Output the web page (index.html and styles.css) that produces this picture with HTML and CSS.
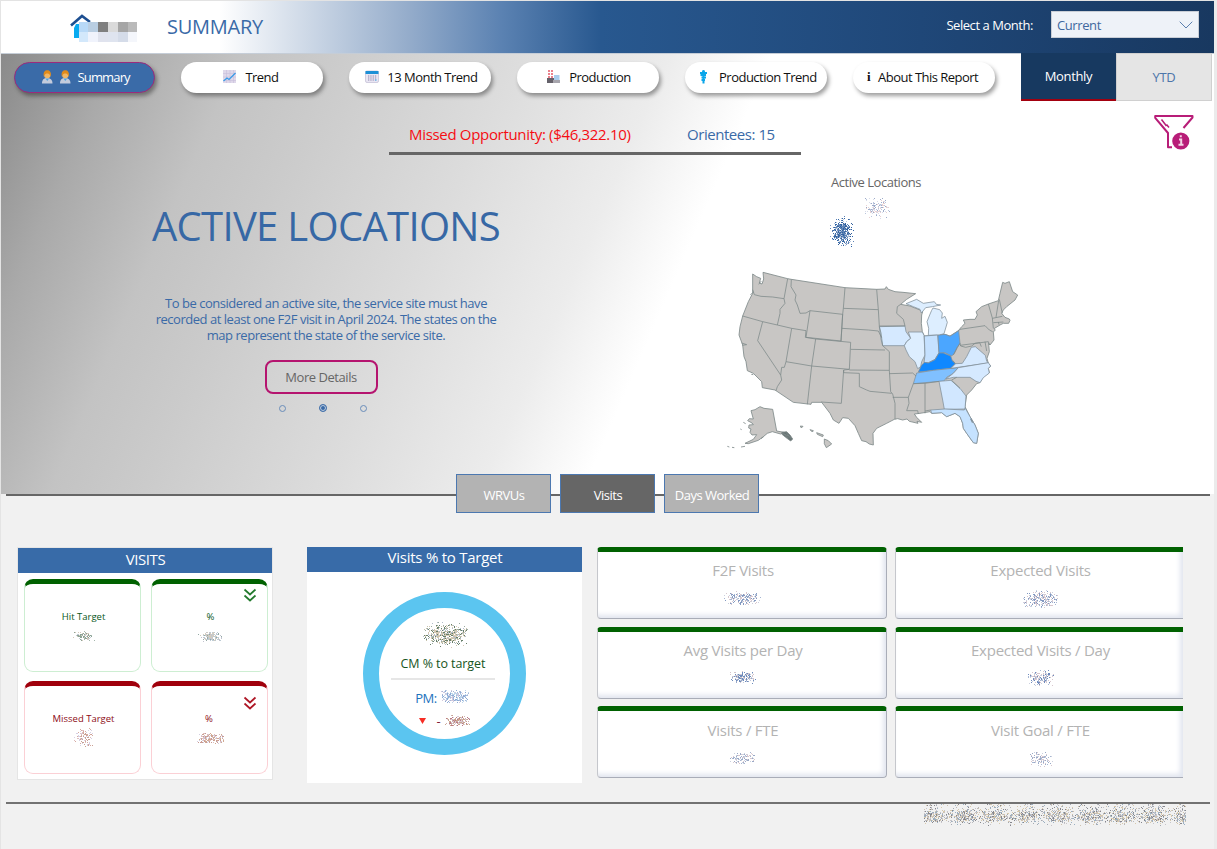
FILE: index.html
```html
<!DOCTYPE html>
<html lang="en">
<head>
<meta charset="utf-8">
<title>Summary</title>
<link rel="stylesheet" href="styles.css">
</head>
<body>
<div class="app">
  <header class="topbar">
    <svg class="logo" width="68" height="30" viewBox="0 0 68 30">
      <path d="M6 10h12v14H4V14z" fill="#08aaf0"/>
      <path d="M1 11.500 12 2l8 6" fill="none" stroke="#1d4f91" stroke-width="2.600"/>
      <g shape-rendering="crispEdges">
        <path d="M9 8h9v10H9z" fill="#b8d9f7"/><path d="M18 8h10v10H18z" fill="#b9cee2"/><path d="M28 8h10v10H28z" fill="#7f7f7f"/><path d="M38 8h10v10H38z" fill="#dadada"/><path d="M48 8h10v10H48z" fill="#a6a6a6"/><path d="M58 8h9v10h-9z" fill="#bababa"/>
        <path d="M9 18h9v10H9z" fill="#d3e8fb"/><path d="M18 18h10v10H18z" fill="#f0f3fc"/><path d="M28 18h10v10H28z" fill="#e0e3ee"/><path d="M38 18h10v10H38z" fill="#dfe4ef"/><path d="M48 18h10v10H48z" fill="#d5dce9"/><path d="M58 18h9v10h-9z" fill="#f4f6fb"/>
      </g>
    </svg>
    <h1 class="page-title">SUMMARY</h1>
    <label class="month-label">Select a Month:</label>
    <div class="month-select"><span>Current</span>
      <svg width="14" height="8" viewBox="0 0 14 8"><path d="M.7.7 7 7 13.300.7" fill="none" stroke="#5b7fae"/></svg>
    </div>
  </header>

  <section class="hero">
    <div class="nav-row">
      <nav class="pills">
        <a class="pill active">
          <svg width="31" height="14" viewBox="0 0 31 14">
            <g id="medic"><path d="M0 13.500c0-4 2-5.500 5-5.500s5.500 1.500 5.500 5.500z" fill="#c3cbdc"/><path d="M3.500 8.500 5.300 11l1.800-2.500z" fill="#4aa3df"/><circle cx="5.300" cy="5" r="3.200" fill="#f0b765"/><path d="M1.800 6.500C1 2 3 .3 5.300.3S9.500 2 8.800 6.500C8 4 6 3.500 5.300 3.500S2.500 4 1.800 6.500z" fill="#e08b1b"/></g>
            <use href="#medic" x="18"/>
          </svg>
          <span>Summary</span></a>
        <a class="pill trend">
          <svg width="13" height="13" viewBox="0 0 13 13"><path d="M0 0h13v13H0z" fill="#dfd8ea"/><path d="M3.500 0v13M7 0v13M10.500 0v13M0 3.500h13M0 7h13M0 10.500h13" stroke="#c8bfda" stroke-width=".6"/><path d="M.5 11 4 8l2 1.500L12.500 3" fill="none" stroke="#3a9be8" stroke-width="1.300"/></svg>
          <span>Trend</span></a>
        <a class="pill month">
          <svg width="14" height="13" viewBox="0 0 14 13"><rect x=".5" y="1" width="13" height="11.500" rx="1.500" fill="#e9e6f3" stroke="#b8b3cc" stroke-width=".6"/><path d="M.5 1h13v3H.5z" fill="#1c8fd6"/><path d="M3 6h9M3 8h9M3 10h7" stroke="#8e86ad" stroke-width="1.200" stroke-dasharray="1.300 1"/><path d="M10 10h1.500" stroke="#1c8fd6"/></svg>
          <span>13 Month Trend</span></a>
        <a class="pill prod">
          <svg width="13" height="13" viewBox="0 0 13 13"><path d="M2 0v8M5 0v8" stroke="#e04050" stroke-width="1.300" stroke-dasharray="2 1"/><path d="M0 8h7v5H0z" fill="#65616a"/><path d="M7 5h5.500v5H7z" fill="#a9cdec"/><path d="M6 10h7v3H6z" fill="#a7a5ad"/></svg>
          <span>Production</span></a>
        <a class="pill ptrend">
          <svg width="9" height="14" viewBox="0 0 9 14"><path d="M4.500 1v12.500M1 3h7M1.500 5h5.500M2.500 7.500h4.500M2.500 10h3.500" fill="none" stroke="#0ba6ea" stroke-width="2"/><circle cx="4.500" cy="1.500" r="1.400" fill="#0ba6ea"/></svg>
          <span>Production Trend</span></a>
        <a class="pill about"><b>i</b><span>About This Report</span></a>
      </nav>
      <div class="period"><a class="on">Monthly</a><a>YTD</a></div>
    </div>

    <div class="kpi-line"><span class="missed">Missed Opportunity: ($46,322.10)</span><span class="orientees">Orientees: 15</span></div>
    <svg class="filter-info" width="42" height="38" viewBox="0 0 42 38" fill="none" stroke="#b81d78" stroke-width="2">
      <path d="M30.500 14 39.500 3.500V2H2.200v1.800L15 19v14.300h4" stroke-linejoin="round"/>
      <path d="m8.500 5.500 5 6.500M13.500 10.500l2.500 3" stroke-width="1.500"/>
      <circle cx="27.800" cy="27" r="8.600" fill="#b81d78" stroke="none"/>
      <path d="M26 25.500h2.200v5M25.500 30.700h5M26.800 22.300h2" stroke="#f2d5e5" stroke-width="2"/>
    </svg>

    <div class="hero-body">
      <div class="intro">
        <h2>ACTIVE LOCATIONS</h2>
        <p><span>To be considered an active site, the service site must have</span><br><span>recorded at least one F2F visit in April 2024. The states on the</span><br><span>map represent the state of the service site.</span></p>
        <a class="more">More Details</a>
        <div class="dots"><i></i><i class="sel"></i><i></i></div>
      </div>
      <div class="locations">
        <div class="map-title">Active Locations</div>
        <svg class="speckle sp-a" width="38" height="24" data-n="150" data-tones="#d8dce9,#b9c5dd,#e9d0d0,#9dabc9"></svg>
        <svg class="speckle sp-b" width="26" height="34" data-n="560" data-tones="#2e63a4,#7d9ac4,#b8c7de,#35629e,#5c82b5"></svg>
        <svg class="map" width="310" height="196" viewBox="0 0 930 588">
          <g fill="#c8c6c4" stroke="#7e8989" stroke-width="2.500" stroke-linejoin="round">
            <path d="M98 42l12 8 12 5-4 14 8 3 5-15-2-20 74 19 11 2 161 25 95 5 25-1 4-7 6 8 20 7 24 2L587 101 560 118 542 133 570 138 600 150 608 155 605 165 604 190 607 215 613 228 653 225 675 223 690 228 715 212 725 200 735 190 730 180 750 178 765 178 772 165 768 155 785 140 805 132 835 122 840 100 848 67 855 70 868 65 878 95 893 105 885 120 860 140 850 150 845 160 855 172 868 177 870 181 866 190 850 190 840 195 822 206 826 210 820 216 822 240 810 255 806 250 808 275 801 295 805 310 812 318 805 325 808 338 790 350 780 368 770 371 755 390 740 405 735 440 750 470 765 495 775 520 770 550 760 548 740 520 730 505 728 490 720 470 705 460 680 470 665 458 635 460 630 455 600 460 583 462 590 472 605 487 591 484 594 490 568 484 561 477 548 480 533 476 523 478 500 490 470 505 459 520 460 555 448 552 438 545 425 542 415 520 405 497 385 475 368 473 357 490 340 480 330 460 305 427 275 427 273 433 220 427 165 390 127 383 125 365 100 340 82 332 78 305 72 290 68 255 57 225 60 200 68 168 85 125 98 100z"/>
            <path d="M93 452l12-3 15-9 12 5 26 3 12 65 22 4-10 5-25-7-15 5-12 10-15 11-30 10-10-1 25-12 10-14-14 1-6-8 3-10-7-3 1-9 13-1-4-5-13-7 5-6 12 1z"/>
            <path d="M185 517l15-2 10 10 8 12-6 6-15-11-12-10" fill="#667373"/><path d="M191 520l15 15m-8-18 15 19m-27-16 20 8m-83 8 8-6"/>
            <path d="M313 537l12 5 10 10-16 11-6-12zM290 518l20 7-2 5-16-7zM241 498l8 1-5 5zM270 509l10 3-3 4zM22 559l6 2m8 1 7 1m20-2 12-2m-5-72 7 4m-16 16 4 2m29-166 6 1"/>
          </g>
          <g transform="translate(450 0)" stroke="#81909a" stroke-width="2.300" stroke-linejoin="round">
            <path d="M108 131l32-13 20 12 33-5 6 8 13 2-25 5-20 3-13 16-4-11-20-8z" fill="#ddeeff"/>
            <path d="M175 226l1-21-5-20 8-20 6-14 4-7 20 5 8 10-2 16 10-6 7 18-4 14-6 20-14 4z" fill="#ddeeff"/>
            <path d="M28 200l77-2 3 17 14 20-12 10-7 12H38l-5-20z" fill="#d5e9ff"/>
            <path d="M115 216h42l5 10 3 59-10 20-3 15-9 6-8-21-17-15-10-20-5-13 7-12 12-10z" fill="#ddeeff"/>
            <path d="M163 228l40-3 4 53-12 20-20 10h-13l3-23z" fill="#c5e1ff"/>
            <path d="M204 226l21-3 15 6 26-17 4 38-8 12-9 18-8 8-20-10-18 2z" fill="#4ba6ff"/>
            <path d="M145 336l10-21 9-8 11 2 20-10 12-20 13 0 22 9 5 14 9 9-15 14-51 6z" fill="#1088ff"/>
            <path d="M130 371l10-32 50-8 75-8-15 17-20 12-8 11z" fill="#80c0ff"/>
            <path d="M243 325l14-14 20-1 13-20 14-28 12-2 14 12 16 14 4 17 5 6z" fill="#d5e9ff"/>
            <path d="M265 323l90-15 7 10-7 7 3 14-18 14-10 15-12-4-18-12h-50l-22 5 22-17z" fill="#d5e9ff"/>
            <path d="M207 364l36-3 27 24 18 23-3 39-62 1-5-28z" fill="#d1e7ff"/>
            <path d="M182 450l43-3 58 3 3-5 14 25 15 25 10 25-5 30-10-2-20-28-10-15-2-15-8-20-15-10-25 10-15-12-30 2z" fill="#c5e2ff"/>
            <path d="M302 476l6 12" stroke-width="4"/>
          </g>
          <g fill="none" stroke="#7e8989" stroke-width="2.300" stroke-linejoin="round">
            <path d="M98 89l5 15 20 5 35 2 34 5 11-60M192 116l3 14-15 18v12l-8 35M68 168l60 17 44 10 43 10 43 7M214 58l-1 22 15 25-3 15 7 15 8 25 18-1 12-7 98 11-5 80-105-11 12-80M215 205l-17 100 77 13 12-81-31-5 2-20M128 185l-15 57 69 103 3-23h8l5-17M182 345l3 15-13 20-4 12M275 318l-13 115M287 237l105 10-4 81-113-10M363 243l5-80 2-18 5-62M370 145l105 4M366 205l79 5 30 3 10 20M392 268l103 2M388 330l120 1M371 330l-7 100-61-4M371 338l47 2v40l22 10 10 4 65 6M388 328l-17 2v8"/>
            <g transform="translate(450 0)"><path d="M20 88l5 61 3 50 5 20 5 38 20 18v56l4 64 6 7 7 28v48M28 198h77l-5-20-20-18 2-20 10-7M58 341l70-2 10 9M130 371l-15 41H68M115 412l2 18-7 22h33l2 10M130 371l35-1v90M165 370l42-6M182 450l-17 3M245 360l15-8M270 385l-25-24M270 208l-5 5M270 208l75-11 13 13 10 5M270 256l85-11 3 10M250 285l12-23 8-12 2 8 15 4 18-4 10-8 14-2 5 12M256 311l-8-10M345 245l5 28M355 132l12 42 3 31M386 122l-8 50M388 118l9 42M367 175l30-6M370 188l30-2M385 186l2 8"/></g>
            <path d="M65 249l15 5-13 2m24-152 10-8m15-23 8-10"/>
          </g>
        </svg>
      </div>
    </div>
  </section>

  <div class="metric-tabs"><a>WRVUs</a><a class="on">Visits</a><a>Days Worked</a></div>

  <section class="metrics">
    <div class="visits">
      <h3>VISITS</h3>
      <div class="tiles">
        <div class="tile good"><span>Hit Target</span><svg class="speckle" width="24" height="11" data-n="105" data-tones="#a5b7ac,#c5cdd4,#d6c9bd,#8aa395"></svg></div>
        <div class="tile good"><span>%</span><svg class="speckle" width="28" height="11" data-n="170" data-tones="#93a9a5,#c2c4cf,#bdcbd4,#d5cbbc"></svg>
          <svg class="chev" width="14" height="14" viewBox="0 0 14 14"><path d="m1.500 1.500 5.500 5 5.500-5M1.500 7.500l5.500 5 5.500-5" fill="none" stroke="currentColor" stroke-width="1.700"/></svg></div>
        <div class="tile bad"><span>Missed Target</span><svg class="speckle" width="24" height="22" data-n="115" data-tones="#ddbdbd,#d5a9a0,#d6d0e5,#c9a093"></svg></div>
        <div class="tile bad"><span class="pct">%</span><svg class="speckle" width="36" height="13" data-n="210" data-tones="#ddbdbd,#c99a92,#d2ccdf,#d1a991"></svg>
          <svg class="chev" width="14" height="14" viewBox="0 0 14 14"><path d="m1.500 1.500 5.500 5 5.500-5M1.500 7.500l5.500 5 5.500-5" fill="none" stroke="currentColor" stroke-width="1.700"/></svg></div>
      </div>
    </div>

    <div class="ratio">
      <h3>Visits % to Target</h3>
      <div class="ring">
        <svg class="speckle r1" width="58" height="29" data-n="620" data-tones="#9baaa0,#c8c4ad,#b3bdcb,#677f69,#d5c8b5"></svg>
        <div class="cm">CM % to target</div>
        <hr>
        <div class="pm"><span>PM:</span><svg class="speckle" width="36" height="15" data-n="270" data-tones="#a8b8d8,#d1c8dd,#8caad4,#bdd5eb"></svg></div>
        <div class="delta"><svg width="7" height="6" viewBox="0 0 7 6"><path d="M0 0h7L3.500 6z" fill="#f72d25"/></svg><span>-</span><svg class="speckle" width="32" height="12" data-n="205" data-tones="#cfafaf,#b97a84,#d8cbd6,#c9a58e"></svg></div>
      </div>
    </div>

    <div class="kpis">
      <div class="kpi"><span>F2F Visits</span><svg class="speckle" width="48" height="15" data-n="260" data-tones="#a6b6d2,#cbd0de,#d8c7ce,#8399c1"></svg></div>
      <div class="kpi"><span>Expected Visits</span><svg class="speckle" width="50" height="20" data-n="290" data-tones="#a6b6d2,#cbd0de,#d8c7ce,#8399c1"></svg></div>
      <div class="kpi"><span>Avg Visits per Day</span><svg class="speckle" width="34" height="13" data-n="210" data-tones="#96a6c8,#c5cbdb,#d3c4ca,#6d8cbd"></svg></div>
      <div class="kpi"><span>Expected Visits / Day</span><svg class="speckle" width="34" height="18" data-n="190" data-tones="#a6b6d2,#cbd0de,#d8c7ce,#6d8abd"></svg></div>
      <div class="kpi"><span>Visits / FTE</span><svg class="speckle" width="36" height="15" data-n="130" data-tones="#a6b6d2,#cbd0de,#d8c7ce,#99a9c7"></svg></div>
      <div class="kpi"><span>Visit Goal / FTE</span><svg class="speckle" width="32" height="17" data-n="115" data-tones="#a6b6d2,#cbd0de,#d8c7ce,#99a9c7"></svg></div>
    </div>
  </section>
  <footer class="foot"><svg class="speckle" width="262" height="23" data-n="2500" data-flat="1" data-tones="#b8b8bd,#a4a9b2,#cfc3ae,#9bb0c2,#86868c,#c7c4c9,#d8c9ac"></svg></footer>
</div>
<script src="script.js"></script>
</body>
</html>
```
FILE: styles.css
```css
* { box-sizing: border-box; }
body { margin: 0; overflow: hidden; font-family: "Open Sans", "Noto Sans", sans-serif; font-size: 13px; color: #222; }
h1, h2, h3, p { margin: 0; font-weight: 400; }
svg { display: block; flex: none; }
.app { width: 1217px; height: 849px; display: flex; flex-direction: column; background: #f1f1f1; border-left: 1px solid #e4e4e4; border-right: 3px solid #ebebeb; }

.topbar { height: 54px; display: flex; align-items: center; flex: none; border-top: 1px solid #e3e3e3; border-bottom: 1px solid #c5cdd7; padding-right: 15px;
  background: linear-gradient(90deg, #fff 0 218px, #93abca 410px, #5b82b2 500px, #28588f 600px, #1f4778 920px, #183860 1213px); }
.logo { margin: 3px 0 0 69px; }
.page-title { margin-left: 29px; font-size: 20px; color: #3a6aa7; letter-spacing: -.25px; line-height: 26px; }
.month-label { margin: -4px 0 0 auto; color: #fff; font-size: 13px; letter-spacing: -.45px; }
.month-select { width: 148px; height: 27px; margin: -5px 0 0 18px; padding: 0 5px 0 5px; display: flex; justify-content: space-between; align-items: center; background: #eef2f8; border: 1px solid #c9ced6; color: #41689f; letter-spacing: -.4px; }

.hero { height: 440px; flex: none; background: linear-gradient(113.5deg, #8a8a8a 0, #a9a9a9 105px, #c3c3c3 220px, #cbcbcb 305px, #dcdcdc 470px, #ececec 613px, #fff 708px); }
.nav-row { display: flex; height: 48px; margin-top: -1px; justify-content: space-between; padding-right: 2px; }
.pills { display: flex; gap: 26px; padding: 9px 0 0 12.500px; }
.pill { width: 141.900px; height: 31px; padding-bottom: 2px; border-radius: 16px; background: #fff; color: #111; display: flex; align-items: center; letter-spacing: -.52px; box-shadow: 2px 3px 4px rgba(0,0,0,.38); white-space: nowrap; }
.pill.active { background: #3a6ba8; color: #fff; border: 1.500px solid #9c2a7c; padding-left: 27px; gap: 5px; letter-spacing: -.85px; }
.trend { padding-left: 42px; gap: 9px; }
.month { padding-left: 16px; gap: 8px; }
.prod { padding-left: 30px; gap: 9px; }
.ptrend { padding-left: 14px; gap: 11px; }
.about { padding-left: 14px; gap: 8px; }
.about b { font-family: "Liberation Serif", serif; font-size: 13px; }
.period { display: flex; }
.period a { width: 96px; display: flex; align-items: center; justify-content: center; background: #e5e5e5; color: #4d76aa; border: 1px solid #d0d0d0; letter-spacing: -.35px; }
.period .on { width: 95px; background: #173960; color: #fff; border: 0; border-bottom: 2px solid #a3000f; }

.kpi-line { width: 412px; height: 54px; margin-left: 388px; border-bottom: 3px solid #666; display: flex; align-items: center; padding: 14px 0 0 20px; font-size: 15px; white-space: nowrap; }
.missed { color: #f50d12; letter-spacing: -.32px; width: 278px; }
.orientees { color: #3a6aa7; letter-spacing: -.45px; }
.filter-info { margin: -41px 0 0 1152px; }
.hero-body { display: flex; padding-top: 4px; }
.intro { width: 650px; padding-top: 45px; text-align: center; display: flex; flex-direction: column; align-items: center; }
.intro h2 { font-size: 40px; line-height: 50px; color: #3768a5; letter-spacing: -.68px; white-space: nowrap; }
.intro p { margin-top: 44px; line-height: 16px; color: #3a6aa7; letter-spacing: -.47px; white-space: nowrap; }
.more { width: 113px; height: 34px; margin: 17px 10px 0 0; border: 2px solid #b5146f; border-radius: 8px; color: #666; display: flex; justify-content: center; align-items: center; letter-spacing: -.45px; }
.dots { display: flex; gap: 33px; margin: 10px 6px 0 0; align-items: center; }
.dots i { width: 7px; height: 7px; border: 1px solid #6a8dba; border-radius: 50%; }
.dots .sel { width: 8px; height: 8px; border: 1px solid #4673ac; background: #3a6aa7; box-shadow: inset 0 0 0 1px #c4d1e1; }
.locations { flex: 1; padding: 16px 0 0 69px; }
.map-title { margin-left: 111px; line-height: 20px; color: #666; letter-spacing: -.47px; }
.sp-a { margin: 4px 0 0 138px; }
.sp-b { margin: -5px 0 0 109px; }
.map { margin-top: 11px; }

.metric-tabs { height: 39px; margin-top: -20px; flex: none; display: flex; gap: 9px; padding-left: 455px; background: linear-gradient(#666, #666) 5px 20px / 1204px 2px no-repeat; }
.metric-tabs a { width: 95px; display: flex; align-items: center; justify-content: center; background: #b3b3b3; color: #fff; border: 1px solid #4c78b0; padding: 3px 0 0 1px; letter-spacing: -.5px; }
.metric-tabs .on { background: #666; }

.metrics { height: 289px; flex: none; display: flex; align-items: flex-start; padding: 34px 0 0 16px; }
.visits { width: 256px; height: 233px; background: #fff; border: 1px solid #e5e5e5; }
.visits h3 { height: 25px; line-height: 22px; padding-left: 1px; background: #386ba8; color: #fff; text-align: center; font-size: 15px; letter-spacing: -.4px; }
.tiles { display: grid; grid-template-columns: 117px 117px; grid-auto-rows: 93px; gap: 9px 10px; padding: 6px; }
.tile { position: relative; border: 1px solid #cdeed2; border-top: 5px solid #006100; border-radius: 9px; display: flex; flex-direction: column; align-items: center; padding: 26px 0 0 2px; font-size: 9.500px; line-height: 13px; color: #07561a; }
.tile .speckle { margin-top: 8px; }
.bad { border-color: #a0000c #fbd0d5 #fbd0d5; color: #8e0d17; }
.bad .speckle { margin-top: 2px; }
.bad .pct { margin-left: -3px; }
.bad .pct + .speckle { margin-top: 7px; }
.chev { position: absolute; right: 10px; top: 4px; }
.good .chev { color: #237a2d; }
.bad .chev { top: 10px; color: #ae1625; }
.ratio { width: 275px; height: 236px; margin-left: 34px; background: #fff; }
.ratio h3 { height: 25px; line-height: 20px; padding-left: 1px; background: #386ba8; color: #fff; text-align: center; font-size: 15px; letter-spacing: -.25px; }
.ring { width: 163px; height: 163px; margin: 20px 0 0 56px; border: 16px solid #5bc5f0; border-radius: 50%; display: flex; flex-direction: column; align-items: center; padding-right: 3px; }
.r1 { margin-top: 12px; margin-left: 5px; }
.cm { font-size: 12.500px; line-height: 18px; margin-top: 6px; color: #17551e; letter-spacing: -.08px; }
.ring hr { width: 104px; height: 2px; border: 0; background: #e6e6e6; margin: 5px 0 0; }
.pm { display: flex; margin-top: 9px; padding-left: 2px; color: #1d73bd; line-height: 19px; letter-spacing: -.45px; }
.delta { display: flex; align-items: center; margin-top: 6px; padding-left: 6px; line-height: 14px; color: #842036; }
.delta span { margin-left: 10px; }
.kpis { display: grid; grid-template-columns: 290px 288px; grid-auto-rows: 72px; gap: 7.700px 8px; margin-left: 15px; }
.kpi { background: #fff; border: 1px solid #a9adb8; border-left-color: #c5c7cc; border-top: 5px solid #006100; border-radius: 4px; box-shadow: inset -3px -3px 5px #e1e5ef; display: flex; flex-direction: column; align-items: center; padding: 7px 0 0 2px; color: #b3b3b3; font-size: 15px; line-height: 22px; letter-spacing: -.24px; }
.kpi:nth-child(even) { border-right: 0; border-radius: 4px 0 0 4px; }
.kpi:nth-child(n+5) { padding-top: 8px; }
.kpi .speckle { margin-top: 10px; }
.kpi:nth-child(2) .speckle, .kpi:nth-child(4) .speckle { margin-top: 8px; }

.foot { margin-left: 5px; width: 1204px; border-top: 2px solid #727272; padding-left: 918px; }
```
FILE: script.js
```js
// Fills each masked value with a stable cloud of single-pixel dots.
let seed = 7;
function rnd() {
  seed = (seed * 1664525 + 1013904223) % 4294967296;
  return seed / 4294967296;
}
function bell() {
  return (rnd() + rnd() + rnd()) / 3;
}
document.querySelectorAll('.speckle').forEach(function (svg) {
  const w = +svg.getAttribute('width');
  const h = +svg.getAttribute('height');
  const flat = svg.dataset.flat;
  const tones = svg.dataset.tones.split(',');
  const paths = tones.map(function () { return ''; });
  svg.setAttribute('shape-rendering', 'crispEdges');
  for (let k = 0; k < +svg.dataset.n; k++) {
    let fx, fy;
    if (flat) {
      // Wide line: dots gather in word-sized clumps, with a thin even layer on top.
      fx = rnd();
      if (rnd() > 0.55 + 0.45 * Math.sin(fx * 52)) fx = rnd();
      fy = rnd() < 0.3 ? rnd() * 0.8 : 0.1 + 0.9 * bell();
    } else {
      fx = w > 30 ? 0.1 + rnd() * 0.5 + rnd() * 0.3 : bell();
      fy = h > 24 ? bell() : 0.05 + rnd() * 0.6 + rnd() * 0.3;
    }
    paths[Math.floor(rnd() * tones.length)] += 'M' + Math.floor(fx * w) + ' ' + Math.floor(fy * h) + 'h1v1h-1z';
  }
  paths.forEach(function (d, i) {
    const p = document.createElementNS('http://www.w3.org/2000/svg', 'path');
    p.setAttribute('d', d);
    p.setAttribute('fill', tones[i]);
    svg.appendChild(p);
  });
});
```
